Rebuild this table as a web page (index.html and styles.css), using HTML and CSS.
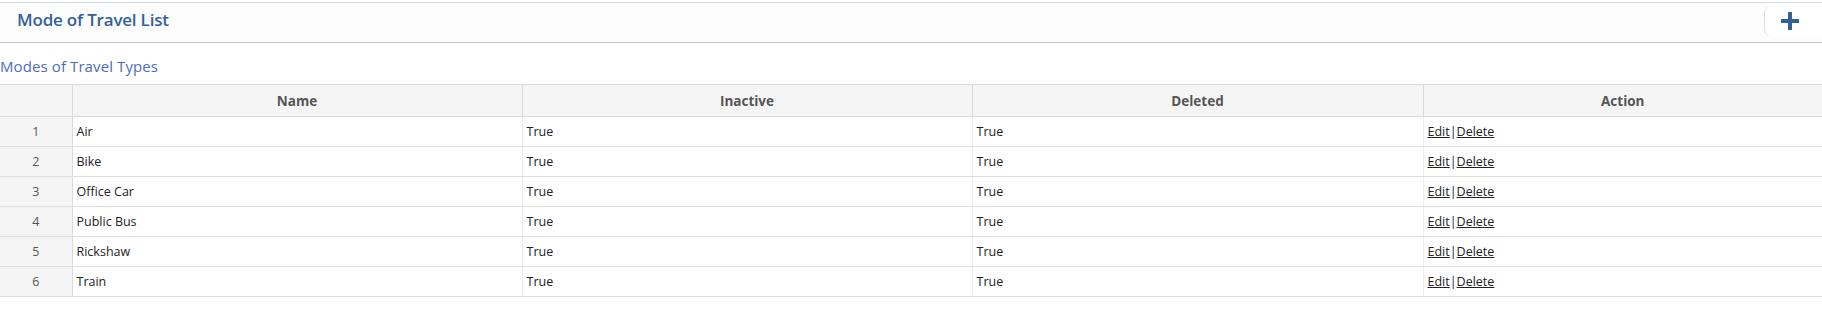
FILE: index.html
```html
<!DOCTYPE html>
<html lang="en">
<head>
  <meta charset="UTF-8" />
  <title>Mode of Travel List</title>
  <link rel="stylesheet" href="styles.css">
</head>
<body>

  <!-- Cabecera -->
  <div class="panel-header">
    <h2 class="panel-title">Mode of Travel List</h2>
    <button class="add-button" title="Add">
      <svg width="18" height="18" viewBox="0 0 18 18">
        <path d="M7 0h4v7h7v4h-7v7h-4v-7h-7v-4h7z" fill="#336199"/>
      </svg>
    </button>
  </div>

  <div class="caption">Modes of Travel Types</div>

  <!-- Tabla -->
  <table class="grid">
    <thead>
      <tr>
        <th class="col-index"></th>
        <th class="col-name">Name</th>
        <th class="col-inactive">Inactive</th>
        <th class="col-deleted">Deleted</th>
        <th>Action</th>
      </tr>
    </thead>
    <tbody>
      <tr><td class="index">1</td><td>Air</td><td>True</td><td>True</td><td><a href="#">Edit</a>|<a href="#">Delete</a></td></tr>
      <tr><td class="index">2</td><td>Bike</td><td>True</td><td>True</td><td><a href="#">Edit</a>|<a href="#">Delete</a></td></tr>
      <tr><td class="index">3</td><td>Office Car</td><td>True</td><td>True</td><td><a href="#">Edit</a>|<a href="#">Delete</a></td></tr>
      <tr><td class="index">4</td><td>Public Bus</td><td>True</td><td>True</td><td><a href="#">Edit</a>|<a href="#">Delete</a></td></tr>
      <tr><td class="index">5</td><td>Rickshaw</td><td>True</td><td>True</td><td><a href="#">Edit</a>|<a href="#">Delete</a></td></tr>
      <tr><td class="index">6</td><td>Train</td><td>True</td><td>True</td><td><a href="#">Edit</a>|<a href="#">Delete</a></td></tr>
    </tbody>
  </table>

</body>
</html>
```

FILE: styles.css
```css
/* ================================
   Base
================================= */
* {
  margin: 0;
  padding: 0;
  box-sizing: border-box;
}

body {
  font-family: "Open Sans", "Noto Sans", sans-serif;
  background: #fff;
  color: #222;
  padding-top: 2px;
}

/* ================================
   Cabecera del panel
================================= */
.panel-header {
  display: flex;
  align-items: center;
  justify-content: space-between;
  height: 41px;
  border-top: 1px solid #cfdbe0;
  border-bottom: 1px solid #c8c8c8;
  background: #fdfdfd;
  padding-left: 17px;
}

.panel-title {
  font-size: 17px;
  font-weight: 600;
  color: #336199;
  letter-spacing: -0.2px;
  margin-top: -6px;
}

.add-button {
  align-self: flex-start;
  margin-top: 3px;
  width: 58px;
  height: 30px;
  background: #fff;
  border: none;
  border-left: 1px solid #ddd;
  border-radius: 7px 0 0 7px;
  display: flex;
  align-items: center;
  justify-content: center;
  padding-right: 8px;
  cursor: pointer;
}

/* ================================
   Título de la tabla
================================= */
.caption {
  font-size: 15px;
  color: #4a6cc4;
  padding: 13px 0 8px 0;
  line-height: 20px;
  letter-spacing: 0.1px;
}

/* ================================
   Tabla
================================= */
.grid {
  width: 100%;
  border-collapse: collapse;
  table-layout: fixed;
  font-size: 12.5px;
}

.grid th {
  height: 32px;
  background: #f5f5f5;
  color: #555;
  font-weight: bold;
  font-size: 13.5px;
  text-align: center;
  border: 1px solid #dadada;
}

.grid th:first-child,
.grid td:first-child {
  border-left: none;
}

.grid th:last-child,
.grid td:last-child {
  border-right: none;
}

.col-index { width: 72px; }
.col-name { width: 450px; }
.col-inactive { width: 450px; }
.col-deleted { width: 451px; }

.grid td {
  height: 30px;
  padding: 0 4px;
  border-bottom: 1px solid #dedede;
  border-left: 1px solid #eee;
  color: #222;
  vertical-align: middle;
}

.grid td.index {
  background: #f5f5f5;
  text-align: center;
  color: #555;
  border-right: 1px solid #dadada;
}

.grid a {
  color: #222;
  text-decoration: underline;
}
```
